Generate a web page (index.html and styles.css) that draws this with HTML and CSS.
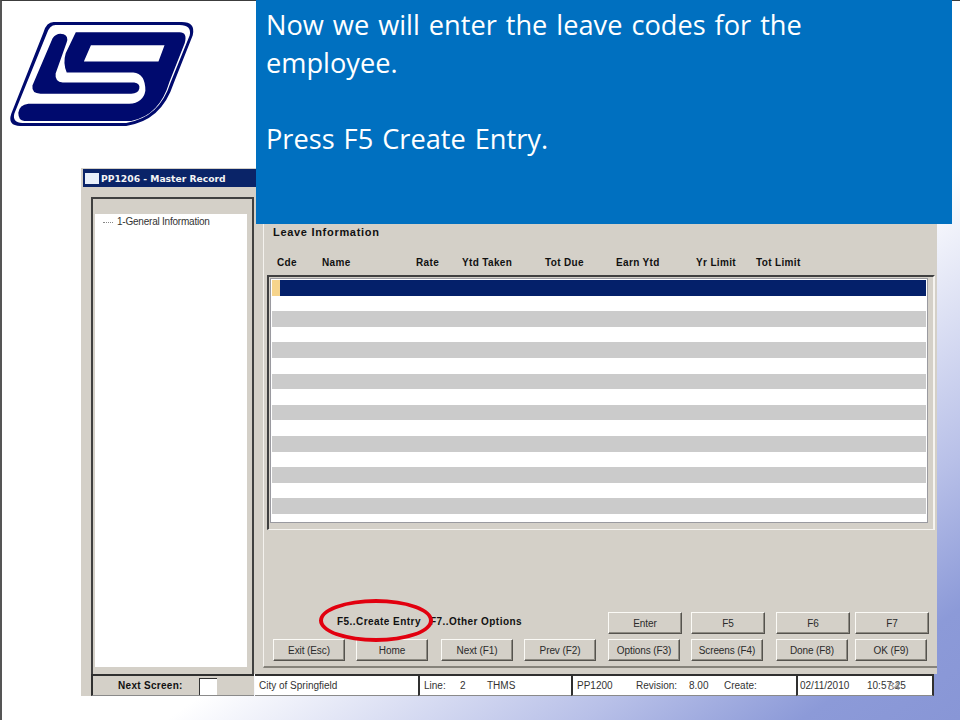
FILE: index.html
```html
<!DOCTYPE html>
<html lang="en">
<head>
<meta charset="utf-8">
<title>PP1206 - Master Record</title>
<link rel="stylesheet" href="styles.css">
</head>
<body>
<div class="slide">
  <svg class="logo" viewBox="0 0 200 120" aria-hidden="true">
    <path class="logo-navy" d="M53 7H180Q194 7 191 20L172 68Q160 105 125 110H20Q7 110 11 98L43 17Q46 7 53 7Z"/>
    <path class="logo-white" d="M55 10H178Q190 10 188 20L169 67Q158 102 125 107H22Q12 107 14 98L46 19Q49 10 55 10Z"/>
    <path class="logo-navy" fill-rule="evenodd" d="M75 17H178Q186 17 183 28L168 66Q158 100 130 105H24Q18 105 18 97Q19 89 28 88H128Q142 87 144 75Q144 58 132 57H66Q62 48 65 38ZM90 30H163L157 46H83Z"/>
    <path class="logo-navy" d="M52 23Q56 17 63 19Q68 21 66 27L55 58Q54 66 62 67H133Q139 68 138 73Q137 78 130 78H40Q31 78 32 70Z"/>
  </svg>

  <div class="window">
    <div class="window-main">
      <div class="titlebar"><span class="title-icon"></span><span>PP1206 - Master Record</span></div>
      <div class="window-body">
        <aside class="side-pane">
          <div class="tree"><span class="tree-dash"></span><span>1-General Information</span></div>
        </aside>
        <section class="content-pane">
          <h2 class="section-title">Leave Information</h2>
          <div class="col-heads">
            <span>Cde</span><span>Name</span><span>Rate</span><span>Ytd Taken</span><span>Tot Due</span><span>Earn Ytd</span><span>Yr Limit</span><span>Tot Limit</span>
          </div>
          <div class="table-frame">
            <div class="rows">
              <div class="row row-selected"><span class="row-marker"></span></div>
              <div class="row"></div><div class="row row-alt"></div>
              <div class="row"></div><div class="row row-alt"></div>
              <div class="row"></div><div class="row row-alt"></div>
              <div class="row"></div><div class="row row-alt"></div>
              <div class="row"></div><div class="row row-alt"></div>
              <div class="row"></div><div class="row row-alt"></div>
              <div class="row"></div><div class="row row-alt"></div>
              <div class="row"></div>
            </div>
          </div>
          <div class="actions">
            <div class="hints"><span>F5..Create Entry</span><span>F7..Other Options</span></div>
            <div class="btn btn-top">Enter</div>
            <div class="btn btn-top">F5</div>
            <div class="btn btn-top">F6</div>
            <div class="btn btn-top">F7</div>
            <div class="btn">Exit (Esc)</div>
            <div class="btn">Home</div>
            <div class="btn">Next (F1)</div>
            <div class="btn">Prev (F2)</div>
            <div class="btn">Options (F3)</div>
            <div class="btn">Screens (F4)</div>
            <div class="btn">Done (F8)</div>
            <div class="btn">OK (F9)</div>
            <div class="callout"></div>
          </div>
        </section>
      </div>
    </div>
    <div class="statusbar">
      <div class="status-next"><b>Next Screen:</b><span class="next-input"></span></div>
      <div class="status-cell status-org"><span>City of Springfield</span></div>
      <div class="status-cell status-line"><span>Line:</span><span>2</span><span>THMS</span></div>
      <div class="status-cell status-prog"><span>PP1200</span><span>Revision:</span><span>8.00</span><span>Create:</span></div>
      <div class="status-cell status-date"><span>02/11/2010</span><span>10:57:25</span></div>
    </div>
  </div>

  <div class="note">
    <p>Now we will enter the leave codes for the employee.</p>
    <p>Press F5 Create Entry.</p>
  </div>
  <span class="page-num">34</span>
</div>
</body>
</html>
```
FILE: styles.css
```css
* { box-sizing: border-box; }
html, body { margin: 0; padding: 0; }
body { width: 960px; height: 720px; overflow: hidden; }

.slide {
  position: relative;
  width: 960px;
  height: 720px;
  padding: 7px 0 0 0;
  border-top: 1px solid #3c3c3c;
  border-left: 2px solid #555;
  background: linear-gradient(145deg, #fff 60%, #b8c0e8 81%, #8c9ad8 92%, #8896d6 100%);
  font-family: "Liberation Sans", Arial, sans-serif;
  font-size: 10px;
  color: #111;
}

.logo { display: block; width: 202px; height: 121px; margin-top: 7px; margin-left: -2px; }
.logo-navy { fill: #000a6e; }
.logo-white { fill: #fff; }

.window { width: 856px; margin: 32px 0 0 79px; }
.window-main { height: 506px; padding-top: 1px; background: #d4d0c8; }

.titlebar {
  display: flex;
  align-items: center;
  gap: 2px;
  height: 18px;
  margin-left: 2px;
  padding-left: 2px;
  background: #0a2468;
  color: #f4f4f4;
  font-family: "DejaVu Sans", Verdana, sans-serif;
  font-size: 9.2px;
  font-weight: 700;
}
.title-icon { width: 14px; height: 11px; background: #e8f0fa; }

.window-body { display: flex; height: 487px; padding: 10px 0 0 10px; }

.side-pane {
  width: 163px;
  height: 477px;
  padding: 15px 0 0 2px;
  border: 2px solid #404040;
  border-bottom: 0;
}
.tree {
  display: flex;
  align-items: flex-start;
  gap: 4px;
  width: 152px;
  height: 453px;
  padding: 2px 0 0 8px;
  background: #fff;
  color: #333;
  letter-spacing: -.22px;
}
.tree-dash { width: 10px; margin-top: 6px; border-top: 1px dotted #888; }

.content-pane {
  width: 674px;
  height: 471px;
  margin-left: 9px;
  padding: 28px 0 0 3px;
  border-left: 1px solid #f4f2ee;
  border-bottom: 2px solid #85827a;
}
.section-title {
  height: 14px;
  margin: 0 0 0 6px;
  font-size: 11px;
  line-height: 14px;
  font-weight: 700;
  letter-spacing: .7px;
}
.col-heads {
  display: grid;
  grid-template-columns: 45px 94px 46px 83px 71px 80px 60px 80px;
  height: 36px;
  padding: 17px 0 0 10px;
  font-size: 10px;
  line-height: 13px;
  font-weight: 700;
  letter-spacing: .35px;
}

.table-frame {
  width: 668px;
  height: 255px;
  padding: 1px 5px 6px 1px;
  border-top: 2px solid #404040;
  border-left: 2px solid #404040;
  border-right: 2px solid #f6f4f0;
  border-bottom: 1px solid #f6f4f0;
}
.rows {
  height: 245px;
  overflow: hidden;
  padding: 1px 1px 0 1px;
  border: 1px solid #9a9aa0;
  background: #fff;
}
.row { height: 15.6px; }
.row-alt { background: #cbcbcb; }
.row-selected { background: #04206a; }
.row-marker { display: block; width: 8px; height: 100%; background: #f6d48c; }

.actions {
  position: relative;
  display: grid;
  grid-template-columns: 83px 85px 83px 84px 83px 85px 79px 74px;
  grid-template-rows: 22px 22px;
  row-gap: 5px;
  width: 660px;
  margin: 82px 0 0 6px;
  letter-spacing: -.1px;
}
.hints {
  grid-column: 1 / 5;
  display: flex;
  gap: 9px;
  padding: 3px 0 0 64px;
  font-weight: 700;
  font-size: 10px;
  line-height: 13px;
  letter-spacing: .45px;
}
.btn {
  display: flex;
  align-items: center;
  justify-content: center;
  width: 72px;
  background: #d4d0c8;
  border: 1px solid;
  border-color: #fbfaf6 #55534e #55534e #fbfaf6;
  box-shadow: inset -1px -1px 0 #8e8b83;
  color: #2b2b2b;
}
.btn-top { width: 74px; }
.callout {
  position: absolute;
  left: 46px;
  top: -13px;
  width: 114px;
  height: 43px;
  border: 4px solid #e2000f;
  border-radius: 50%;
}

.statusbar {
  display: flex;
  width: 853px;
  height: 22px;
  border-left: 10px solid #d4d0c8;
}
.status-next {
  display: flex;
  align-items: center;
  gap: 16px;
  width: 163px;
  padding-left: 25px;
  background: #d4d0c8;
  border-top: 2px solid #303030;
  border-left: 2px solid #303030;
  border-bottom: 1px solid #8a8a8a;
}
.status-next b { letter-spacing: .3px; }
.next-input {
  width: 18px;
  height: 17px;
  margin-top: 2px;
  background: #fff;
  border-top: 1px solid #333;
  border-left: 1px solid #333;
}
.status-cell {
  display: flex;
  align-items: center;
  padding-left: 4px;
  background: #fff;
  border-top: 2px solid #303030;
  border-bottom: 1px solid #8a8a8a;
  color: #333;
}
.status-org { width: 163px; margin-left: 1px; }
.status-line { width: 153px; border-left: 2px solid #303030; gap: 0; }
.status-line span:nth-child(1) { width: 36px; }
.status-line span:nth-child(2) { width: 27px; }
.status-prog { width: 225px; border-left: 2px solid #303030; }
.status-prog span:nth-child(1) { width: 59px; }
.status-prog span:nth-child(2) { width: 53px; }
.status-prog span:nth-child(3) { width: 35px; }
.status-date { flex: 1; border-left: 2px solid #303030; border-right: 2px solid #303030; padding-left: 2px; }
.status-date span:first-child { width: 67px; }

.note {
  position: absolute;
  left: 254px;
  top: -1px;
  width: 696px;
  height: 224px;
  padding: 6px 70px 0 10px;
  background: #0070c0;
  color: #fff;
  font-family: "Open Sans", "Noto Sans", sans-serif;
  font-size: 27.2px;
  word-spacing: 1.9px;
  line-height: 38px;
}
.note p { margin: 0 0 38px; }

.page-num {
  position: absolute;
  left: 886px;
  top: 679px;
  color: #8b8b8b;
  font-size: 11px;
}
```
